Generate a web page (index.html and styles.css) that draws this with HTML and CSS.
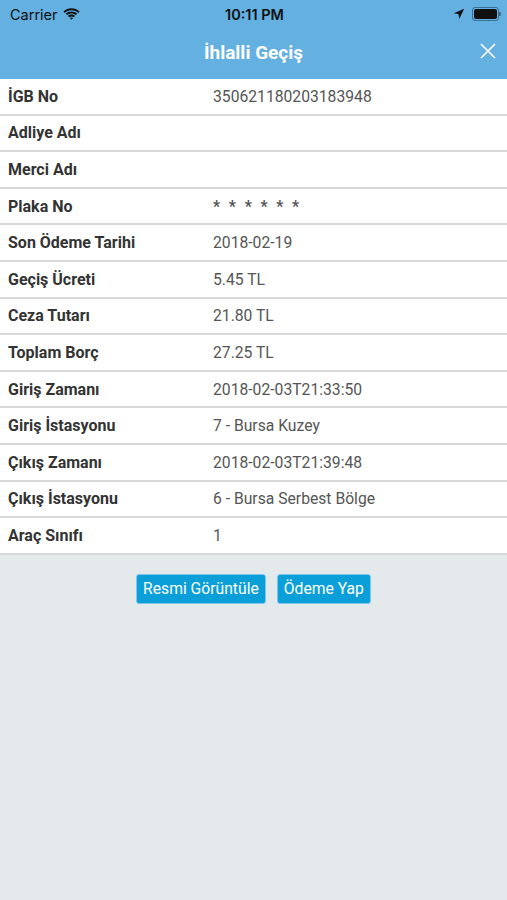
FILE: index.html
```html
<!DOCTYPE html>
<html lang="tr">
<head>
    <meta charset="UTF-8">
    <meta name="viewport" content="width=device-width, initial-scale=1.0">
    <title>İhlalli Geçiş</title>
    <link rel="stylesheet" href="styles.css">
</head>
<body>
    <div class="header">
        <div class="status-bar">
            <div class="carrier">Carrier
                <svg class="wifi" width="17" height="12" viewBox="0 0 17 12">
                    <path d="M8.5 2.2c2.6 0 5 1 6.8 2.7l1.3-1.4C14.4 1.4 11.6.2 8.5.2S2.6 1.4.4 3.5l1.3 1.4C3.5 3.2 5.9 2.2 8.5 2.2z" fill="#111"/>
                    <path d="M8.5 5.4c1.7 0 3.2.6 4.4 1.7l1.3-1.4C12.7 4.3 10.7 3.4 8.5 3.4S4.3 4.3 2.8 5.7l1.3 1.4c1.2-1.1 2.7-1.7 4.4-1.7z" fill="#111"/>
                    <path d="M8.5 8.4c.9 0 1.6.3 2.2.9l1.3-1.4c-.9-.9-2.1-1.4-3.5-1.4S5.9 7 5 7.9l1.3 1.4c.6-.6 1.300-.9 2.2-.9zM8.5 11.8l1.6-1.7c-.4-.4-1-.6-1.6-.6s-1.2.2-1.6.6z" fill="#111"/>
                </svg>
            </div>
            <div class="clock">10:11 PM</div>
            <div class="status-right">
                <svg width="12" height="12" viewBox="0 0 12 12">
                    <path d="M11.2.8L.8 5.2l4.6.9.9 4.6z" fill="#111"/>
                </svg>
                <span class="battery"><span class="battery-level"></span></span>
            </div>
        </div>
        <div class="nav-bar">
            <span class="title">İhlalli Geçiş</span>
            <svg class="close" width="16" height="16" viewBox="0 0 16 16">
                <path d="M1 1L15 15M15 1L1 15" stroke="#fff" stroke-width="1.6"/>
            </svg>
        </div>
    </div>

    <div class="detail-list">
        <div class="row"><span class="label">İGB No</span><span class="value">350621180203183948</span></div>
        <div class="row"><span class="label">Adliye Adı</span><span class="value"></span></div>
        <div class="row"><span class="label">Merci Adı</span><span class="value"></span></div>
        <div class="row"><span class="label">Plaka No</span><span class="value stars">* * * * * *</span></div>
        <div class="row"><span class="label">Son Ödeme Tarihi</span><span class="value">2018-02-19</span></div>
        <div class="row"><span class="label">Geçiş Ücreti</span><span class="value">5.45 TL</span></div>
        <div class="row"><span class="label">Ceza Tutarı</span><span class="value">21.80 TL</span></div>
        <div class="row"><span class="label">Toplam Borç</span><span class="value">27.25 TL</span></div>
        <div class="row"><span class="label">Giriş Zamanı</span><span class="value">2018-02-03T21:33:50</span></div>
        <div class="row"><span class="label">Giriş İstasyonu</span><span class="value">7 - Bursa Kuzey</span></div>
        <div class="row"><span class="label">Çıkış Zamanı</span><span class="value">2018-02-03T21:39:48</span></div>
        <div class="row"><span class="label">Çıkış İstasyonu</span><span class="value">6 - Bursa Serbest Bölge</span></div>
        <div class="row"><span class="label">Araç Sınıfı</span><span class="value">1</span></div>
    </div>

    <div class="actions">
        <button class="btn">Resmi Görüntüle</button>
        <button class="btn">Ödeme Yap</button>
    </div>
</body>
</html>
```

FILE: styles.css
```css
body {
    margin: 0;
    background-color: #e4e9ec;
    font-family: Roboto, "Liberation Sans", sans-serif;
}

.header {
    background-color: #63b0e1;
    height: 79px;
}

.status-bar {
    height: 28px;
    display: flex;
    align-items: center;
    justify-content: space-between;
    padding: 0 8px 0 10px;
    font-family: Inter, "Liberation Sans", sans-serif;
    font-size: 14.5px;
    color: #111;
}

.carrier {
    flex: 1;
    display: flex;
    align-items: center;
    gap: 5px;
}

.clock {
    font-weight: 600;
}

.status-right {
    flex: 1;
    display: flex;
    justify-content: flex-end;
    align-items: center;
    gap: 7px;
}

.battery {
    width: 23px;
    height: 10px;
    border: 1px solid #3b6f93;
    border-radius: 3px;
    padding: 1px;
    position: relative;
}

.battery::after {
    content: "";
    position: absolute;
    right: -3px;
    top: 4px;
    width: 2px;
    height: 4px;
    background: #3b6f93;
    border-radius: 0 1px 1px 0;
}

.battery-level {
    display: block;
    height: 100%;
    background: #111;
    border-radius: 2px;
}

.nav-bar {
    height: 51px;
    display: flex;
    align-items: center;
    justify-content: center;
    position: relative;
}

.title {
    color: #fff;
    font-size: 19px;
    font-weight: bold;
    margin-top: -3px;
}

.close {
    position: absolute;
    right: 11px;
    top: 15px;
}

.detail-list {
    background-color: #fff;
}

.row {
    display: flex;
    align-items: center;
    height: 34.6px;
    border-bottom: 2px solid #d8d8d8;
    padding-left: 8px;
}

.label {
    width: 205px;
    font-weight: bold;
    font-size: 16px;
    color: #333;
}

.value {
    font-size: 15.7px;
    color: #555;
}

.stars {
    font-weight: bold;
    letter-spacing: 2.4px;
}

.actions {
    display: flex;
    justify-content: center;
    gap: 11px;
    padding-top: 19px;
}

.btn {
    height: 30px;
    padding: 0 6px;
    background-color: #0b9fd9;
    color: #fff;
    border: 1px solid #7cc8ec;
    border-radius: 3px;
    font-family: Roboto, "Liberation Sans", sans-serif;
    font-size: 15.7px;
}
```
